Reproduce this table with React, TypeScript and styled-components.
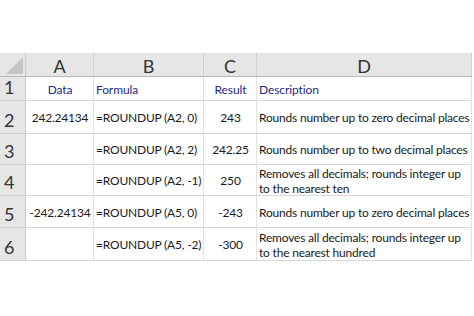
import { Fragment } from "react";
import styled, { createGlobalStyle } from "styled-components";

const Global = createGlobalStyle`
  body {
    margin: 0;
    background: #ffffff;
    font-family: Lato, "Open Sans", sans-serif;
  }
`;

const Page = styled.div`
  width: 474px;
  height: 316px;
  padding-top: 53px;
  box-sizing: border-box;
`;

const Sheet = styled.div`
  display: grid;
  grid-template-columns: 26px 68px 110px 53px 215px;
  grid-template-rows: 24px 24px 33px 31px 31px 32px 33px;
  width: 472px;
`;

const Corner = styled.div`
  position: relative;
  background: #e6e6e6;
  border-right: 1px solid #c8c8c8;
  border-bottom: 1px solid #b8b8b8;
  box-sizing: border-box;

  &::after {
    content: "";
    position: absolute;
    right: 2px;
    bottom: 2px;
    width: 0;
    height: 0;
    border-left: 17px solid transparent;
    border-bottom: 17px solid #c4c4c4;
  }
`;

const ColHead = styled.div`
  display: flex;
  align-items: center;
  justify-content: center;
  padding-top: 2px;
  background: #e6e6e6;
  border-right: 1px solid #cfcfcf;
  border-bottom: 1px solid #b8b8b8;
  box-sizing: border-box;
  font-size: 18px;
  color: #333333;
`;

const RowHead = styled.div`
  display: flex;
  align-items: flex-end;
  padding: 0 0 2px 4px;
  background: #e6e6e6;
  border-right: 1px solid #c8c8c8;
  border-bottom: 1px solid #d2d2d2;
  box-sizing: border-box;
  font-size: 18px;
  line-height: 22px;
  color: #333333;
`;

const Cell = styled.div<{ $align?: "left" | "center"; $head?: boolean }>`
  display: flex;
  flex-direction: column;
  justify-content: center;
  align-items: ${(p) => (p.$align === "center" ? "center" : "flex-start")};
  padding: 2px 1px 0 2px;
  border-right: 1px solid #e2e2e2;
  border-bottom: 1px solid #d8d8d8;
  box-sizing: border-box;
  font-size: 12px;
  letter-spacing: ${(p) => (p.$head ? "-0.1px" : "-0.2px")};
  line-height: 15.5px;
  color: ${(p) => (p.$head ? "#1f2a80" : "#1a1a1a")};
  white-space: nowrap;
`;

type Row = {
  n: string;
  a: string;
  b: string;
  c: string;
  d: string[];
};

const rows: Row[] = [
  { n: "2", a: "242.24134", b: "=ROUNDUP (A2, 0)", c: "243", d: ["Rounds number up to zero decimal places"] },
  { n: "3", a: "", b: "=ROUNDUP (A2, 2)", c: "242.25", d: ["Rounds number up to two decimal places"] },
  { n: "4", a: "", b: "=ROUNDUP (A2, -1)", c: "250", d: ["Removes all decimals; rounds integer up", "to the nearest ten"] },
  { n: "5", a: "-242.24134", b: "=ROUNDUP (A5, 0)", c: "-243", d: ["Rounds number up to zero decimal places"] },
  { n: "6", a: "", b: "=ROUNDUP (A5, -2)", c: "-300", d: ["Removes all decimals; rounds integer up", "to the nearest hundred"] },
];

export default function App() {
  return (
    <>
      <Global />
      <Page>
        <Sheet>
          <Corner />
          <ColHead>A</ColHead>
          <ColHead>B</ColHead>
          <ColHead>C</ColHead>
          <ColHead>D</ColHead>

          <RowHead>1</RowHead>
          <Cell $head $align="center">Data</Cell>
          <Cell $head>Formula</Cell>
          <Cell $head $align="center">Result</Cell>
          <Cell $head>Description</Cell>

          {rows.map((r) => (
            <Fragment key={r.n}>
              <RowHead>{r.n}</RowHead>
              <Cell $align="center">{r.a}</Cell>
              <Cell>{r.b}</Cell>
              <Cell $align="center">{r.c}</Cell>
              <Cell>
                {r.d.map((line) => (
                  <span key={line}>{line}</span>
                ))}
              </Cell>
            </Fragment>
          ))}
        </Sheet>
      </Page>
    </>
  );
}
